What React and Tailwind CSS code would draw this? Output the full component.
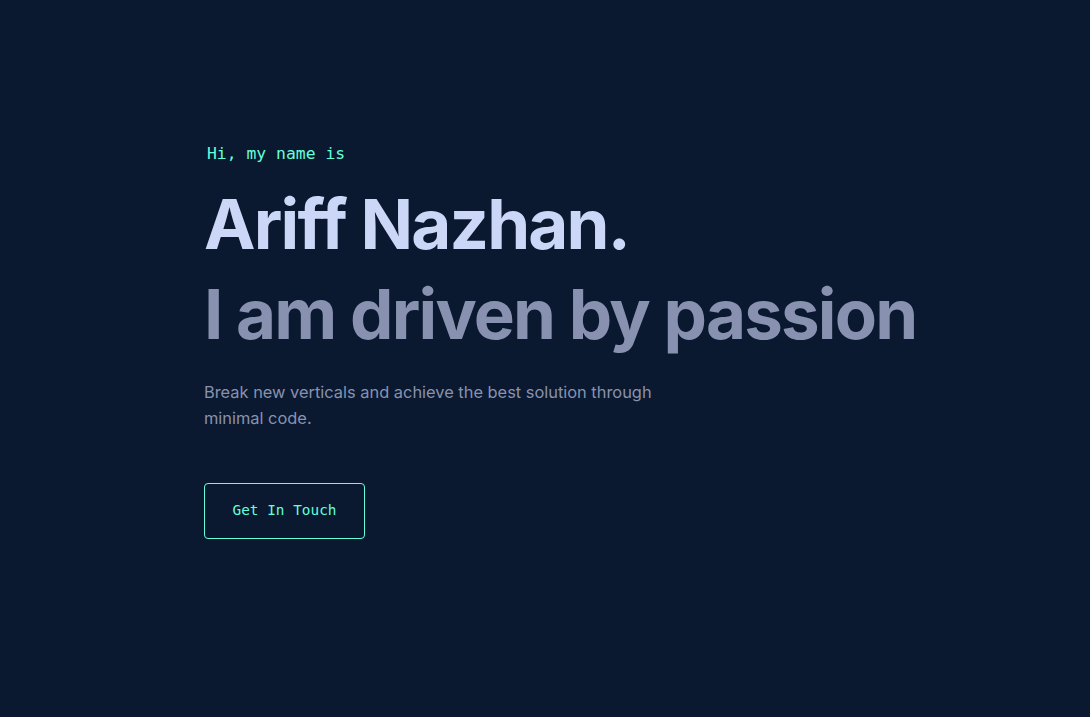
import React from "react";

export default function App() {
  return (
    <div className="min-h-screen bg-[#0a192f] pl-[204px] pt-[139px] font-['Inter',sans-serif]">
      {/* Intro */}
      <p className="ml-[3px] font-['DejaVu_Sans_Mono',monospace] text-[16.4px] leading-[30px] text-[#64ffda]">
        Hi, my name is
      </p>
      <h1 className="mt-[11px] text-[69px] font-bold leading-[88px] tracking-[-1.8px] text-[#ccd6f6]">
        Ariff Nazhan.
      </h1>
      <h2 className="mt-[2px] text-[69px] font-bold leading-[88px] tracking-[-1.8px] text-[#8892b0]">
        I am driven by passion
      </h2>
      <p className="mt-[21px] max-w-[480px] text-[16.4px] leading-[26px] text-[#8892b0]">
        Break new verticals and achieve the best solution through minimal code.
      </p>
      <button className="mt-[52px] h-[56px] w-[161px] rounded-[4px] border border-[#64ffda] font-['DejaVu_Sans_Mono',monospace] text-[14.4px] text-[#64ffda]">
        Get In Touch
      </button>
    </div>
  );
}
